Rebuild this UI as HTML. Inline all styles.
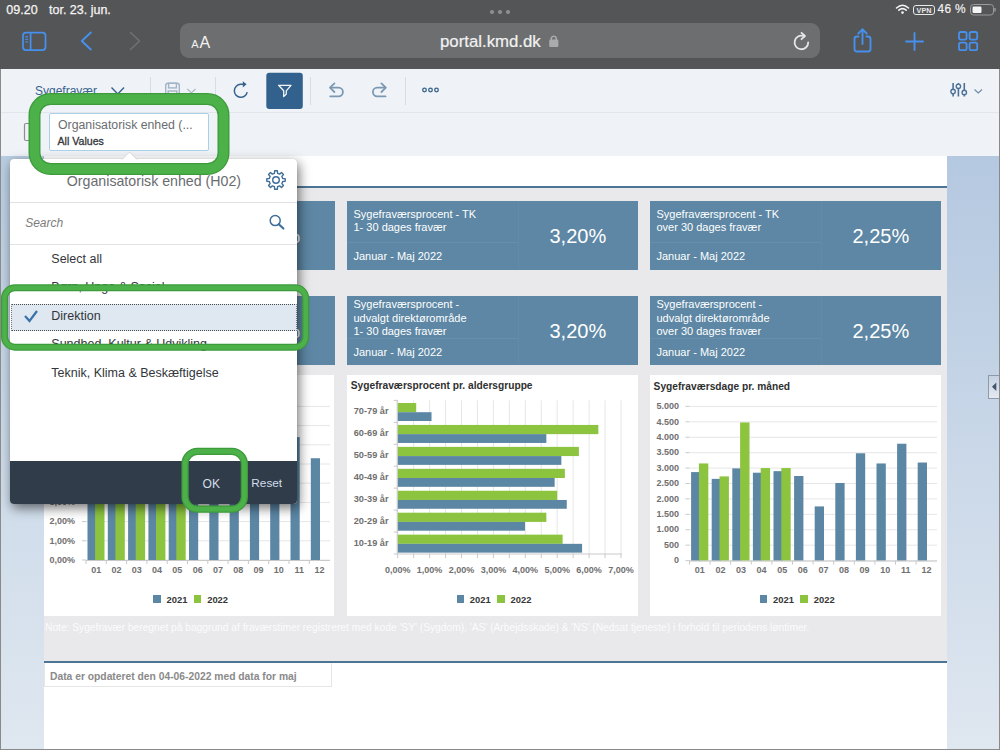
<!DOCTYPE html>
<html><head><meta charset="utf-8">
<style>
*{box-sizing:border-box;margin:0;padding:0}
html,body{width:1000px;height:750px;overflow:hidden;background:#fff;font-family:"Liberation Sans",sans-serif}
.a{position:absolute}
.t{position:absolute;white-space:nowrap;line-height:1}
svg{position:absolute;left:0;top:0;overflow:visible}
</style></head><body>
<div class="a" style="left:0;top:0;width:1000px;height:750px;overflow:hidden">

<div class="a" style="left:0px;top:0px;width:1000px;height:69px;background:#545556;"></div>
<div class="a" style="left:180px;top:23px;width:640px;height:35px;background:#6c6e6f;border-radius:9px"></div>
<div class="a" style="left:0px;top:69px;width:1000px;height:87px;background:#eff3f8;"></div>
<div class="a" style="left:0px;top:112px;width:1000px;height:1px;background:#e0e6ec;"></div>
<div class="t" style="left:6.30px;top:3.62px;font-size:12.5px;color:#f4f4f4;font-weight:normal;font-style:normal;-webkit-text-stroke:0.25px #f4f4f4">09.20</div>
<div class="t" style="left:49.00px;top:3.62px;font-size:12.5px;color:#f4f4f4;font-weight:normal;font-style:normal;-webkit-text-stroke:0.25px #f4f4f4">tor. 23. jun.</div>
<div class="t" style="left:937.50px;top:3.72px;font-size:11.9px;color:#f4f4f4;font-weight:normal;font-style:normal;-webkit-text-stroke:0.15px #f4f4f4;letter-spacing:0.3px">46 %</div>
<svg width="1000" height="750"><g fill="#8e9092"><circle cx="492" cy="12" r="2.1"/><circle cx="500" cy="12" r="2.1"/><circle cx="508" cy="12" r="2.1"/></g><g fill="none" stroke="#f4f4f4" stroke-width="1.6" stroke-linecap="round"><path d="M896.5 8 Q902.5 2.5 908.5 8"/><path d="M898.8 10.2 Q902.5 7 906.2 10.2"/></g><circle cx="902.5" cy="12.6" r="1.3" fill="#f4f4f4"/><rect x="913.5" y="5.5" width="21" height="9" rx="2.5" fill="none" stroke="#e8e8e8" stroke-width="1"/><text x="924" y="13" font-family="Liberation Sans" font-size="7.2" font-weight="bold" fill="#e8e8e8" text-anchor="middle">VPN</text><rect x="970.5" y="4.5" width="23" height="10.5" rx="3" fill="none" stroke="#9a9b9c" stroke-width="1"/><rect x="972.5" y="6.5" width="9" height="6.5" rx="1.2" fill="#f4f4f4"/><path d="M995 8 L995 11.5" stroke="#9a9b9c" stroke-width="1.4"/><g fill="none" stroke="#4690ee" stroke-width="1.75"><rect x="23" y="32.5" width="22.5" height="17.5" rx="3"/><path d="M30.6 32.5 L30.6 50"/></g><g stroke="#4690ee" stroke-width="1.2"><path d="M25.3 36.7 H28"/><path d="M25.3 39.3 H28"/><path d="M25.3 41.9 H28"/></g><path d="M90.8 32.5 L81.8 41 L90.8 49.5" fill="none" stroke="#4690ee" stroke-width="1.9" stroke-linecap="round" stroke-linejoin="round"/><path d="M130.5 32.5 L139.5 41 L130.5 49.5" fill="none" stroke="#707274" stroke-width="1.5" stroke-linecap="round" stroke-linejoin="round"/><text x="191.3" y="47.5" font-family="Liberation Sans" font-size="11" fill="#f2f2f2">A</text><text x="199.5" y="47.5" font-family="Liberation Sans" font-size="16" fill="#f2f2f2">A</text><g><path d="M551.3 40 V37.8 A2.8 2.8 0 0 1 556.3 37.8 V40" fill="none" stroke="#a9abad" stroke-width="1.5"/><rect x="549.2" y="39.6" width="9.2" height="7.4" rx="1.3" fill="#a9abad"/></g><g transform="translate(0,1)"><path d="M808.2 41.5 A6.8 6.8 0 1 1 803.5 35" fill="none" stroke="#e6e6e6" stroke-width="1.8" stroke-linecap="round"/><path d="M801.5 31.8 L805 35 L801.5 38.2" fill="none" stroke="#e6e6e6" stroke-width="1.8" stroke-linecap="round" stroke-linejoin="round"/></g><g fill="none" stroke="#4690ee" stroke-width="1.9" stroke-linecap="round" stroke-linejoin="round"><path d="M858.5 36.5 H857 Q854.5 36.5 854.5 39 V49 Q854.5 51.5 857 51.5 H868 Q870.5 51.5 870.5 49 V39 Q870.5 36.5 868 36.5 H866.5"/><path d="M862.5 44 V29.5"/><path d="M858.3 33.5 L862.5 29.3 L866.7 33.5"/></g><g stroke="#4690ee" stroke-width="1.9" stroke-linecap="round"><path d="M914.5 33 V50"/><path d="M906 41.5 H923"/></g><g fill="none" stroke="#4690ee" stroke-width="1.8"><rect x="959" y="32" width="7.6" height="7.6" rx="1.8"/><rect x="969.6" y="32" width="7.6" height="7.6" rx="1.8"/><rect x="959" y="42.6" width="7.6" height="7.6" rx="1.8"/><rect x="969.6" y="42.6" width="7.6" height="7.6" rx="1.8"/></g></svg>
<div class="t" style="left:440.00px;top:33.65px;font-size:16.8px;color:#f2f2f2;font-weight:normal;font-style:normal;-webkit-text-stroke:0.2px #f2f2f2">portal.kmd.dk</div>
<div class="t" style="left:35.00px;top:85.03px;font-size:12px;color:#37628c;font-weight:normal;font-style:normal;">Sygefravær</div>
<div class="a" style="left:150px;top:77px;width:1px;height:28px;background:#d6dde4;"></div>
<div class="a" style="left:215px;top:77px;width:1px;height:28px;background:#d6dde4;"></div>
<div class="a" style="left:310px;top:77px;width:1px;height:28px;background:#d6dde4;"></div>
<div class="a" style="left:405px;top:77px;width:1px;height:28px;background:#d6dde4;"></div>
<svg width="1000" height="750"><path d="M111.5 87.5 L117.8 94 L124 87.5" fill="none" stroke="#37628c" stroke-width="1.4"/><g fill="none" stroke="#a2b4c5" stroke-width="1.4"><rect x="165.7" y="83.3" width="13.6" height="15" rx="2.2"/><rect x="168.6" y="83.3" width="7.8" height="4.6"/><rect x="168.2" y="91" width="8.6" height="7"/></g><path d="M187.3 89 L191.4 92.8 L195.5 89" fill="none" stroke="#a2b4c5" stroke-width="1.1"/><path d="M247.2 92.2 A6.5 6.5 0 1 1 240.6 84.3 H243.3" fill="none" stroke="#37628c" stroke-width="1.5"/><path d="M242.8 81.2 L246.6 84.3 L242.8 87.4 Z" fill="#37628c"/><rect x="266.3" y="72.7" width="36.5" height="36.2" rx="3" fill="#33618d"/><path d="M278.6 85.3 H291 L286.3 90.8 V94 L283.7 96.6 V90.8 Z" fill="none" stroke="#f2f5f8" stroke-width="1.3" stroke-linejoin="round"/><g fill="none" stroke="#7b98b3" stroke-width="1.8" stroke-linecap="round" stroke-linejoin="round"><path d="M330.2 96.3 H338.6 A4.3 4.3 0 0 0 338.6 87.7 H330.5"/><path d="M334.4 83.4 L330 87.7 L334.4 92"/></g><g fill="none" stroke="#7b98b3" stroke-width="1.8" stroke-linecap="round" stroke-linejoin="round"><path d="M385.6 96.3 H377.2 A4.3 4.3 0 0 1 377.2 87.7 H385.3"/><path d="M381.4 83.4 L385.8 87.7 L381.4 92"/></g><g fill="none" stroke="#37628c" stroke-width="1.3"><circle cx="424.5" cy="90" r="1.8"/><circle cx="430.5" cy="90" r="1.8"/><circle cx="436.5" cy="90" r="1.8"/></g><g fill="none" stroke="#4d7196" stroke-width="1.6"><path d="M953.1 83 V96.5 M958.4 83 V96.5 M964.3 83 V96.5"/></g><g fill="#eff3f8" stroke="#4d7196" stroke-width="1.4"><circle cx="953.1" cy="91.5" r="2.2"/><circle cx="958.4" cy="86.3" r="2.2"/><circle cx="964.3" cy="92.4" r="2.2"/></g><path d="M974.5 89.5 L978.3 93 L982 89.5" fill="none" stroke="#6d8aa6" stroke-width="1.1"/><rect x="24.5" y="123.5" width="10" height="17" rx="1.5" fill="none" stroke="#8d8d8d" stroke-width="1.2"/></svg>
<div class="a" style="left:1px;top:156px;width:43px;height:594px;background:linear-gradient(#b9cde2,#dfe7f0);"></div>
<div class="a" style="left:947px;top:156px;width:53px;height:594px;background:linear-gradient(#b4c8e0,#dfe7f0);"></div>
<div class="a" style="left:44px;top:156px;width:903px;height:30px;background:#fff;"></div>
<div class="a" style="left:44px;top:185.5px;width:903px;height:2.5px;background:#4e7495;"></div>
<div class="a" style="left:44px;top:188px;width:903px;height:473px;background:#e9e9eb;"></div>
<div class="a" style="left:44px;top:661px;width:903px;height:2px;background:#4e7495;"></div>
<div class="a" style="left:44px;top:663px;width:903px;height:87px;background:#fff;"></div>
<div class="a" style="left:44px;top:201px;width:291px;height:69px;background:#5d87a4;"></div>
<div class="a" style="left:44px;top:241.8px;width:171px;height:1px;background:rgba(255,255,255,0.07)"></div>
<div class="a" style="left:215px;top:201px;width:1px;height:69px;background:rgba(255,255,255,0.035)"></div>
<div class="t" style="left:50.50px;top:209.36px;font-size:11px;color:#fff;font-weight:normal;font-style:normal;">Sygefraværsprocent - Direktion</div>
<div class="t" style="left:50.50px;top:222.46px;font-size:11px;color:#fff;font-weight:normal;font-style:normal;">1- 30 dages fravær</div>
<div class="t" style="left:50.50px;top:251.46px;font-size:11px;color:#fff;font-weight:normal;font-style:normal;">Januar - Maj 2022</div>
<div class="t" style="left:243.50px;top:225.59px;font-size:20px;color:#fff;font-weight:normal;font-style:normal;">3,20%</div>
<div class="a" style="left:347px;top:201px;width:291px;height:69px;background:#5d87a4;"></div>
<div class="a" style="left:347px;top:241.8px;width:171px;height:1px;background:rgba(255,255,255,0.07)"></div>
<div class="a" style="left:518px;top:201px;width:1px;height:69px;background:rgba(255,255,255,0.035)"></div>
<div class="t" style="left:353.50px;top:209.36px;font-size:11px;color:#fff;font-weight:normal;font-style:normal;">Sygefraværsprocent - TK</div>
<div class="t" style="left:353.50px;top:222.46px;font-size:11px;color:#fff;font-weight:normal;font-style:normal;">1- 30 dages fravær</div>
<div class="t" style="left:353.50px;top:251.46px;font-size:11px;color:#fff;font-weight:normal;font-style:normal;">Januar - Maj 2022</div>
<div class="t" style="left:549.50px;top:225.59px;font-size:20px;color:#fff;font-weight:normal;font-style:normal;">3,20%</div>
<div class="a" style="left:650px;top:201px;width:291px;height:69px;background:#5d87a4;"></div>
<div class="a" style="left:650px;top:241.8px;width:171px;height:1px;background:rgba(255,255,255,0.07)"></div>
<div class="a" style="left:821px;top:201px;width:1px;height:69px;background:rgba(255,255,255,0.035)"></div>
<div class="t" style="left:656.50px;top:209.36px;font-size:11px;color:#fff;font-weight:normal;font-style:normal;">Sygefraværsprocent - TK</div>
<div class="t" style="left:656.50px;top:222.46px;font-size:11px;color:#fff;font-weight:normal;font-style:normal;">over 30 dages fravær</div>
<div class="t" style="left:656.50px;top:251.46px;font-size:11px;color:#fff;font-weight:normal;font-style:normal;">Januar - Maj 2022</div>
<div class="t" style="left:852.50px;top:225.59px;font-size:20px;color:#fff;font-weight:normal;font-style:normal;">2,25%</div>
<div class="a" style="left:44px;top:296px;width:291px;height:69px;background:#5d87a4;"></div>
<div class="a" style="left:44px;top:338px;width:171px;height:1px;background:rgba(255,255,255,0.07)"></div>
<div class="a" style="left:215px;top:296px;width:1px;height:69px;background:rgba(255,255,255,0.035)"></div>
<div class="t" style="left:50.50px;top:299.26px;font-size:11px;color:#fff;font-weight:normal;font-style:normal;">Sygefraværsprocent -</div>
<div class="t" style="left:50.50px;top:312.86px;font-size:11px;color:#fff;font-weight:normal;font-style:normal;">udvalgt direktørområde</div>
<div class="t" style="left:50.50px;top:326.26px;font-size:11px;color:#fff;font-weight:normal;font-style:normal;">1- 30 dages fravær</div>
<div class="t" style="left:50.50px;top:347.06px;font-size:11px;color:#fff;font-weight:normal;font-style:normal;">Januar - Maj 2022</div>
<div class="t" style="left:243.50px;top:320.99px;font-size:20px;color:#fff;font-weight:normal;font-style:normal;">3,20%</div>
<div class="a" style="left:347px;top:296px;width:291px;height:69px;background:#5d87a4;"></div>
<div class="a" style="left:347px;top:338px;width:171px;height:1px;background:rgba(255,255,255,0.07)"></div>
<div class="a" style="left:518px;top:296px;width:1px;height:69px;background:rgba(255,255,255,0.035)"></div>
<div class="t" style="left:353.50px;top:299.26px;font-size:11px;color:#fff;font-weight:normal;font-style:normal;">Sygefraværsprocent -</div>
<div class="t" style="left:353.50px;top:312.86px;font-size:11px;color:#fff;font-weight:normal;font-style:normal;">udvalgt direktørområde</div>
<div class="t" style="left:353.50px;top:326.26px;font-size:11px;color:#fff;font-weight:normal;font-style:normal;">1- 30 dages fravær</div>
<div class="t" style="left:353.50px;top:347.06px;font-size:11px;color:#fff;font-weight:normal;font-style:normal;">Januar - Maj 2022</div>
<div class="t" style="left:549.50px;top:320.99px;font-size:20px;color:#fff;font-weight:normal;font-style:normal;">3,20%</div>
<div class="a" style="left:650px;top:296px;width:291px;height:69px;background:#5d87a4;"></div>
<div class="a" style="left:650px;top:338px;width:171px;height:1px;background:rgba(255,255,255,0.07)"></div>
<div class="a" style="left:821px;top:296px;width:1px;height:69px;background:rgba(255,255,255,0.035)"></div>
<div class="t" style="left:656.50px;top:299.26px;font-size:11px;color:#fff;font-weight:normal;font-style:normal;">Sygefraværsprocent -</div>
<div class="t" style="left:656.50px;top:312.86px;font-size:11px;color:#fff;font-weight:normal;font-style:normal;">udvalgt direktørområde</div>
<div class="t" style="left:656.50px;top:326.26px;font-size:11px;color:#fff;font-weight:normal;font-style:normal;">over 30 dages fravær</div>
<div class="t" style="left:656.50px;top:347.06px;font-size:11px;color:#fff;font-weight:normal;font-style:normal;">Januar - Maj 2022</div>
<div class="t" style="left:852.50px;top:320.99px;font-size:20px;color:#fff;font-weight:normal;font-style:normal;">2,25%</div>
<div class="a" style="left:44px;top:374.5px;width:290px;height:241.5px;background:#fff;"></div>
<div class="a" style="left:347px;top:374.5px;width:291px;height:241.5px;background:#fff;"></div>
<div class="a" style="left:650px;top:374.5px;width:291px;height:241.5px;background:#fff;"></div>
<svg width="1000" height="750" viewBox="0 0 1000 750"><line x1="86" y1="560.0" x2="330" y2="560.0" stroke="#e6e6e6" stroke-width="1"/><line x1="82" y1="560.0" x2="86" y2="560.0" stroke="#c9c9c9" stroke-width="1"/><line x1="86" y1="540.8" x2="330" y2="540.8" stroke="#e6e6e6" stroke-width="1"/><line x1="82" y1="540.8" x2="86" y2="540.8" stroke="#c9c9c9" stroke-width="1"/><line x1="86" y1="521.6" x2="330" y2="521.6" stroke="#e6e6e6" stroke-width="1"/><line x1="82" y1="521.6" x2="86" y2="521.6" stroke="#c9c9c9" stroke-width="1"/><line x1="86" y1="502.4" x2="330" y2="502.4" stroke="#e6e6e6" stroke-width="1"/><line x1="82" y1="502.4" x2="86" y2="502.4" stroke="#c9c9c9" stroke-width="1"/><line x1="86" y1="483.2" x2="330" y2="483.2" stroke="#e6e6e6" stroke-width="1"/><line x1="82" y1="483.2" x2="86" y2="483.2" stroke="#c9c9c9" stroke-width="1"/><line x1="86" y1="464.0" x2="330" y2="464.0" stroke="#e6e6e6" stroke-width="1"/><line x1="82" y1="464.0" x2="86" y2="464.0" stroke="#c9c9c9" stroke-width="1"/><line x1="86" y1="444.8" x2="330" y2="444.8" stroke="#e6e6e6" stroke-width="1"/><line x1="82" y1="444.8" x2="86" y2="444.8" stroke="#c9c9c9" stroke-width="1"/><line x1="86" y1="425.6" x2="330" y2="425.6" stroke="#e6e6e6" stroke-width="1"/><line x1="82" y1="425.6" x2="86" y2="425.6" stroke="#c9c9c9" stroke-width="1"/><line x1="86" y1="406.4" x2="330" y2="406.4" stroke="#e6e6e6" stroke-width="1"/><line x1="82" y1="406.4" x2="86" y2="406.4" stroke="#c9c9c9" stroke-width="1"/><rect x="87.50" y="429.44" width="9.2" height="130.56" fill="#5b86a4"/><rect x="95.10" y="435.20" width="9.4" height="124.80" fill="#8cc43f"/><line x1="86.00" y1="560" x2="86.00" y2="564" stroke="#c9c9c9"/><rect x="107.80" y="427.52" width="9.2" height="132.48" fill="#5b86a4"/><rect x="115.40" y="429.44" width="9.4" height="130.56" fill="#8cc43f"/><line x1="106.30" y1="560" x2="106.30" y2="564" stroke="#c9c9c9"/><rect x="128.10" y="421.76" width="9.2" height="138.24" fill="#5b86a4"/><rect x="135.70" y="423.68" width="9.4" height="136.32" fill="#8cc43f"/><line x1="126.60" y1="560" x2="126.60" y2="564" stroke="#c9c9c9"/><rect x="148.40" y="431.36" width="9.2" height="128.64" fill="#5b86a4"/><rect x="156.00" y="427.52" width="9.4" height="132.48" fill="#8cc43f"/><line x1="146.90" y1="560" x2="146.90" y2="564" stroke="#c9c9c9"/><rect x="168.70" y="433.28" width="9.2" height="126.72" fill="#5b86a4"/><rect x="176.30" y="435.20" width="9.4" height="124.80" fill="#8cc43f"/><line x1="167.20" y1="560" x2="167.20" y2="564" stroke="#c9c9c9"/><rect x="189.00" y="429.44" width="9.2" height="130.56" fill="#5b86a4"/><line x1="187.50" y1="560" x2="187.50" y2="564" stroke="#c9c9c9"/><rect x="209.30" y="425.60" width="9.2" height="134.40" fill="#5b86a4"/><line x1="207.80" y1="560" x2="207.80" y2="564" stroke="#c9c9c9"/><rect x="229.60" y="427.52" width="9.2" height="132.48" fill="#5b86a4"/><line x1="228.10" y1="560" x2="228.10" y2="564" stroke="#c9c9c9"/><rect x="249.90" y="433.28" width="9.2" height="126.72" fill="#5b86a4"/><line x1="248.40" y1="560" x2="248.40" y2="564" stroke="#c9c9c9"/><rect x="270.20" y="429.44" width="9.2" height="130.56" fill="#5b86a4"/><line x1="268.70" y1="560" x2="268.70" y2="564" stroke="#c9c9c9"/><rect x="290.50" y="437.12" width="9.2" height="122.88" fill="#5b86a4"/><line x1="289.00" y1="560" x2="289.00" y2="564" stroke="#c9c9c9"/><rect x="310.80" y="458.24" width="9.2" height="101.76" fill="#5b86a4"/><line x1="309.30" y1="560" x2="309.30" y2="564" stroke="#c9c9c9"/><line x1="86" y1="560.5" x2="330" y2="560.5" stroke="#c9c9c9"/><line x1="397.70" y1="400.4" x2="397.70" y2="554" stroke="#e6e6e6"/><line x1="397.70" y1="554" x2="397.70" y2="558" stroke="#c9c9c9"/><line x1="413.65" y1="400.4" x2="413.65" y2="554" stroke="#e6e6e6"/><line x1="413.65" y1="554" x2="413.65" y2="558" stroke="#c9c9c9"/><line x1="429.60" y1="400.4" x2="429.60" y2="554" stroke="#e6e6e6"/><line x1="429.60" y1="554" x2="429.60" y2="558" stroke="#c9c9c9"/><line x1="445.55" y1="400.4" x2="445.55" y2="554" stroke="#e6e6e6"/><line x1="445.55" y1="554" x2="445.55" y2="558" stroke="#c9c9c9"/><line x1="461.50" y1="400.4" x2="461.50" y2="554" stroke="#e6e6e6"/><line x1="461.50" y1="554" x2="461.50" y2="558" stroke="#c9c9c9"/><line x1="477.45" y1="400.4" x2="477.45" y2="554" stroke="#e6e6e6"/><line x1="477.45" y1="554" x2="477.45" y2="558" stroke="#c9c9c9"/><line x1="493.40" y1="400.4" x2="493.40" y2="554" stroke="#e6e6e6"/><line x1="493.40" y1="554" x2="493.40" y2="558" stroke="#c9c9c9"/><line x1="509.35" y1="400.4" x2="509.35" y2="554" stroke="#e6e6e6"/><line x1="509.35" y1="554" x2="509.35" y2="558" stroke="#c9c9c9"/><line x1="525.30" y1="400.4" x2="525.30" y2="554" stroke="#e6e6e6"/><line x1="525.30" y1="554" x2="525.30" y2="558" stroke="#c9c9c9"/><line x1="541.25" y1="400.4" x2="541.25" y2="554" stroke="#e6e6e6"/><line x1="541.25" y1="554" x2="541.25" y2="558" stroke="#c9c9c9"/><line x1="557.20" y1="400.4" x2="557.20" y2="554" stroke="#e6e6e6"/><line x1="557.20" y1="554" x2="557.20" y2="558" stroke="#c9c9c9"/><line x1="573.15" y1="400.4" x2="573.15" y2="554" stroke="#e6e6e6"/><line x1="573.15" y1="554" x2="573.15" y2="558" stroke="#c9c9c9"/><line x1="589.10" y1="400.4" x2="589.10" y2="554" stroke="#e6e6e6"/><line x1="589.10" y1="554" x2="589.10" y2="558" stroke="#c9c9c9"/><line x1="605.05" y1="400.4" x2="605.05" y2="554" stroke="#e6e6e6"/><line x1="605.05" y1="554" x2="605.05" y2="558" stroke="#c9c9c9"/><line x1="621.00" y1="400.4" x2="621.00" y2="554" stroke="#e6e6e6"/><line x1="621.00" y1="554" x2="621.00" y2="558" stroke="#c9c9c9"/><rect x="397.7" y="403.00" width="18.50" height="9.2" fill="#8cc43f"/><rect x="397.7" y="412.20" width="33.81" height="8.8" fill="#5b86a4"/><line x1="393.7" y1="400.40" x2="397.7" y2="400.40" stroke="#c9c9c9"/><rect x="397.7" y="424.94" width="200.65" height="9.2" fill="#8cc43f"/><rect x="397.7" y="434.14" width="148.65" height="8.8" fill="#5b86a4"/><line x1="393.7" y1="422.34" x2="397.7" y2="422.34" stroke="#c9c9c9"/><rect x="397.7" y="446.88" width="181.19" height="9.2" fill="#8cc43f"/><rect x="397.7" y="456.08" width="163.65" height="8.8" fill="#5b86a4"/><line x1="393.7" y1="444.28" x2="397.7" y2="444.28" stroke="#c9c9c9"/><rect x="397.7" y="468.82" width="167.16" height="9.2" fill="#8cc43f"/><rect x="397.7" y="478.02" width="156.95" height="8.8" fill="#5b86a4"/><line x1="393.7" y1="466.22" x2="397.7" y2="466.22" stroke="#c9c9c9"/><rect x="397.7" y="490.76" width="159.50" height="9.2" fill="#8cc43f"/><rect x="397.7" y="499.96" width="169.07" height="8.8" fill="#5b86a4"/><line x1="393.7" y1="488.16" x2="397.7" y2="488.16" stroke="#c9c9c9"/><rect x="397.7" y="512.70" width="148.65" height="9.2" fill="#8cc43f"/><rect x="397.7" y="521.90" width="127.28" height="8.8" fill="#5b86a4"/><line x1="393.7" y1="510.10" x2="397.7" y2="510.10" stroke="#c9c9c9"/><rect x="397.7" y="534.64" width="164.92" height="9.2" fill="#8cc43f"/><rect x="397.7" y="543.84" width="184.38" height="8.8" fill="#5b86a4"/><line x1="393.7" y1="532.04" x2="397.7" y2="532.04" stroke="#c9c9c9"/><line x1="393.7" y1="554" x2="397.7" y2="554" stroke="#c9c9c9"/><line x1="397.2" y1="400.4" x2="397.2" y2="554" stroke="#c9c9c9"/><line x1="397.7" y1="554" x2="622" y2="554" stroke="#c9c9c9"/><line x1="689.5" y1="560.60" x2="937" y2="560.60" stroke="#e6e6e6"/><line x1="685.5" y1="560.60" x2="689.5" y2="560.60" stroke="#c9c9c9"/><line x1="689.5" y1="545.18" x2="937" y2="545.18" stroke="#e6e6e6"/><line x1="685.5" y1="545.18" x2="689.5" y2="545.18" stroke="#c9c9c9"/><line x1="689.5" y1="529.76" x2="937" y2="529.76" stroke="#e6e6e6"/><line x1="685.5" y1="529.76" x2="689.5" y2="529.76" stroke="#c9c9c9"/><line x1="689.5" y1="514.34" x2="937" y2="514.34" stroke="#e6e6e6"/><line x1="685.5" y1="514.34" x2="689.5" y2="514.34" stroke="#c9c9c9"/><line x1="689.5" y1="498.92" x2="937" y2="498.92" stroke="#e6e6e6"/><line x1="685.5" y1="498.92" x2="689.5" y2="498.92" stroke="#c9c9c9"/><line x1="689.5" y1="483.50" x2="937" y2="483.50" stroke="#e6e6e6"/><line x1="685.5" y1="483.50" x2="689.5" y2="483.50" stroke="#c9c9c9"/><line x1="689.5" y1="468.08" x2="937" y2="468.08" stroke="#e6e6e6"/><line x1="685.5" y1="468.08" x2="689.5" y2="468.08" stroke="#c9c9c9"/><line x1="689.5" y1="452.66" x2="937" y2="452.66" stroke="#e6e6e6"/><line x1="685.5" y1="452.66" x2="689.5" y2="452.66" stroke="#c9c9c9"/><line x1="689.5" y1="437.24" x2="937" y2="437.24" stroke="#e6e6e6"/><line x1="685.5" y1="437.24" x2="689.5" y2="437.24" stroke="#c9c9c9"/><line x1="689.5" y1="421.82" x2="937" y2="421.82" stroke="#e6e6e6"/><line x1="685.5" y1="421.82" x2="689.5" y2="421.82" stroke="#c9c9c9"/><line x1="689.5" y1="406.40" x2="937" y2="406.40" stroke="#e6e6e6"/><line x1="685.5" y1="406.40" x2="689.5" y2="406.40" stroke="#c9c9c9"/><rect x="691.10" y="472.09" width="9.3" height="88.51" fill="#5b86a4"/><rect x="698.90" y="463.45" width="9.4" height="97.15" fill="#8cc43f"/><line x1="689.50" y1="560.6" x2="689.50" y2="564.6" stroke="#c9c9c9"/><rect x="711.70" y="478.87" width="9.3" height="81.73" fill="#5b86a4"/><rect x="719.50" y="476.41" width="9.4" height="84.19" fill="#8cc43f"/><line x1="710.10" y1="560.6" x2="710.10" y2="564.6" stroke="#c9c9c9"/><rect x="732.30" y="468.39" width="9.3" height="92.21" fill="#5b86a4"/><rect x="740.10" y="422.44" width="9.4" height="138.16" fill="#8cc43f"/><line x1="730.70" y1="560.6" x2="730.70" y2="564.6" stroke="#c9c9c9"/><rect x="752.90" y="472.71" width="9.3" height="87.89" fill="#5b86a4"/><rect x="760.70" y="468.08" width="9.4" height="92.52" fill="#8cc43f"/><line x1="751.30" y1="560.6" x2="751.30" y2="564.6" stroke="#c9c9c9"/><rect x="773.50" y="471.16" width="9.3" height="89.44" fill="#5b86a4"/><rect x="781.30" y="468.08" width="9.4" height="92.52" fill="#8cc43f"/><line x1="771.90" y1="560.6" x2="771.90" y2="564.6" stroke="#c9c9c9"/><rect x="794.10" y="476.01" width="9.3" height="84.59" fill="#5b86a4"/><line x1="792.50" y1="560.6" x2="792.50" y2="564.6" stroke="#c9c9c9"/><rect x="814.70" y="506.41" width="9.3" height="54.19" fill="#5b86a4"/><line x1="813.10" y1="560.6" x2="813.10" y2="564.6" stroke="#c9c9c9"/><rect x="835.30" y="483.01" width="9.3" height="77.59" fill="#5b86a4"/><line x1="833.70" y1="560.6" x2="833.70" y2="564.6" stroke="#c9c9c9"/><rect x="855.90" y="453.28" width="9.3" height="107.32" fill="#5b86a4"/><line x1="854.30" y1="560.6" x2="854.30" y2="564.6" stroke="#c9c9c9"/><rect x="876.50" y="463.45" width="9.3" height="97.15" fill="#5b86a4"/><line x1="874.90" y1="560.6" x2="874.90" y2="564.6" stroke="#c9c9c9"/><rect x="897.10" y="443.72" width="9.3" height="116.88" fill="#5b86a4"/><line x1="895.50" y1="560.6" x2="895.50" y2="564.6" stroke="#c9c9c9"/><rect x="917.70" y="462.53" width="9.3" height="98.07" fill="#5b86a4"/><line x1="916.10" y1="560.6" x2="916.10" y2="564.6" stroke="#c9c9c9"/><line x1="689.5" y1="561.1" x2="937" y2="561.1" stroke="#c9c9c9"/></svg>
<div class="t" style="left:350.80px;top:381.33px;font-size:10.2px;color:#303030;font-weight:bold;font-style:normal;">Sygefraværsprocent pr. aldersgruppe</div>
<div class="t" style="left:653.60px;top:381.73px;font-size:10.2px;color:#303030;font-weight:bold;font-style:normal;">Sygefraværsdage pr. måned</div>
<div class="t" style="left:47.50px;top:380.53px;font-size:10.2px;color:#222;font-weight:bold;font-style:normal;">Sygefraværsprocent pr. måned</div>
<div class="t" style="left:-125px;width:200px;text-align:right;top:555.73px;font-size:9px;color:#707070;font-weight:bold">0,00%</div>
<div class="t" style="left:-125px;width:200px;text-align:right;top:536.53px;font-size:9px;color:#707070;font-weight:bold">1,00%</div>
<div class="t" style="left:-125px;width:200px;text-align:right;top:517.33px;font-size:9px;color:#707070;font-weight:bold">2,00%</div>
<div class="t" style="left:-125px;width:200px;text-align:right;top:498.13px;font-size:9px;color:#707070;font-weight:bold">3,00%</div>
<div class="t" style="left:-125px;width:200px;text-align:right;top:478.93px;font-size:9px;color:#707070;font-weight:bold">4,00%</div>
<div class="t" style="left:-125px;width:200px;text-align:right;top:459.73px;font-size:9px;color:#707070;font-weight:bold">5,00%</div>
<div class="t" style="left:-125px;width:200px;text-align:right;top:440.53px;font-size:9px;color:#707070;font-weight:bold">6,00%</div>
<div class="t" style="left:-125px;width:200px;text-align:right;top:421.33px;font-size:9px;color:#707070;font-weight:bold">7,00%</div>
<div class="t" style="left:-125px;width:200px;text-align:right;top:402.13px;font-size:9px;color:#707070;font-weight:bold">8,00%</div>
<div class="t" style="left:-3.85px;width:200px;text-align:center;top:565.53px;font-size:9px;color:#707070;font-weight:bold">01</div>
<div class="t" style="left:16.45px;width:200px;text-align:center;top:565.53px;font-size:9px;color:#707070;font-weight:bold">02</div>
<div class="t" style="left:36.75px;width:200px;text-align:center;top:565.53px;font-size:9px;color:#707070;font-weight:bold">03</div>
<div class="t" style="left:57.05px;width:200px;text-align:center;top:565.53px;font-size:9px;color:#707070;font-weight:bold">04</div>
<div class="t" style="left:77.35px;width:200px;text-align:center;top:565.53px;font-size:9px;color:#707070;font-weight:bold">05</div>
<div class="t" style="left:97.65px;width:200px;text-align:center;top:565.53px;font-size:9px;color:#707070;font-weight:bold">06</div>
<div class="t" style="left:117.95px;width:200px;text-align:center;top:565.53px;font-size:9px;color:#707070;font-weight:bold">07</div>
<div class="t" style="left:138.25px;width:200px;text-align:center;top:565.53px;font-size:9px;color:#707070;font-weight:bold">08</div>
<div class="t" style="left:158.55px;width:200px;text-align:center;top:565.53px;font-size:9px;color:#707070;font-weight:bold">09</div>
<div class="t" style="left:178.85px;width:200px;text-align:center;top:565.53px;font-size:9px;color:#707070;font-weight:bold">10</div>
<div class="t" style="left:199.15px;width:200px;text-align:center;top:565.53px;font-size:9px;color:#707070;font-weight:bold">11</div>
<div class="t" style="left:219.45px;width:200px;text-align:center;top:565.53px;font-size:9px;color:#707070;font-weight:bold">12</div>
<div class="t" style="left:188.5px;width:200px;text-align:right;top:406.93px;font-size:9.2px;color:#707070;font-weight:bold">70-79 år</div>
<div class="t" style="left:188.5px;width:200px;text-align:right;top:428.87px;font-size:9.2px;color:#707070;font-weight:bold">60-69 år</div>
<div class="t" style="left:188.5px;width:200px;text-align:right;top:450.81px;font-size:9.2px;color:#707070;font-weight:bold">50-59 år</div>
<div class="t" style="left:188.5px;width:200px;text-align:right;top:472.75px;font-size:9.2px;color:#707070;font-weight:bold">40-49 år</div>
<div class="t" style="left:188.5px;width:200px;text-align:right;top:494.69px;font-size:9.2px;color:#707070;font-weight:bold">30-39 år</div>
<div class="t" style="left:188.5px;width:200px;text-align:right;top:516.63px;font-size:9.2px;color:#707070;font-weight:bold">20-29 år</div>
<div class="t" style="left:188.5px;width:200px;text-align:right;top:538.57px;font-size:9.2px;color:#707070;font-weight:bold">10-19 år</div>
<div class="t" style="left:297.70px;width:200px;text-align:center;top:566.03px;font-size:9px;color:#707070;font-weight:bold">0,00%</div>
<div class="t" style="left:329.60px;width:200px;text-align:center;top:566.03px;font-size:9px;color:#707070;font-weight:bold">1,00%</div>
<div class="t" style="left:361.50px;width:200px;text-align:center;top:566.03px;font-size:9px;color:#707070;font-weight:bold">2,00%</div>
<div class="t" style="left:393.40px;width:200px;text-align:center;top:566.03px;font-size:9px;color:#707070;font-weight:bold">3,00%</div>
<div class="t" style="left:425.30px;width:200px;text-align:center;top:566.03px;font-size:9px;color:#707070;font-weight:bold">4,00%</div>
<div class="t" style="left:457.20px;width:200px;text-align:center;top:566.03px;font-size:9px;color:#707070;font-weight:bold">5,00%</div>
<div class="t" style="left:489.10px;width:200px;text-align:center;top:566.03px;font-size:9px;color:#707070;font-weight:bold">6,00%</div>
<div class="t" style="left:521.00px;width:200px;text-align:center;top:566.03px;font-size:9px;color:#707070;font-weight:bold">7,00%</div>
<div class="t" style="left:479px;width:200px;text-align:right;top:556.33px;font-size:9px;color:#707070;font-weight:bold">0</div>
<div class="t" style="left:479px;width:200px;text-align:right;top:540.91px;font-size:9px;color:#707070;font-weight:bold">500</div>
<div class="t" style="left:479px;width:200px;text-align:right;top:525.49px;font-size:9px;color:#707070;font-weight:bold">1.000</div>
<div class="t" style="left:479px;width:200px;text-align:right;top:510.07px;font-size:9px;color:#707070;font-weight:bold">1.500</div>
<div class="t" style="left:479px;width:200px;text-align:right;top:494.65px;font-size:9px;color:#707070;font-weight:bold">2.000</div>
<div class="t" style="left:479px;width:200px;text-align:right;top:479.23px;font-size:9px;color:#707070;font-weight:bold">2.500</div>
<div class="t" style="left:479px;width:200px;text-align:right;top:463.81px;font-size:9px;color:#707070;font-weight:bold">3.000</div>
<div class="t" style="left:479px;width:200px;text-align:right;top:448.39px;font-size:9px;color:#707070;font-weight:bold">3.500</div>
<div class="t" style="left:479px;width:200px;text-align:right;top:432.97px;font-size:9px;color:#707070;font-weight:bold">4.000</div>
<div class="t" style="left:479px;width:200px;text-align:right;top:417.55px;font-size:9px;color:#707070;font-weight:bold">4.500</div>
<div class="t" style="left:479px;width:200px;text-align:right;top:402.13px;font-size:9px;color:#707070;font-weight:bold">5.000</div>
<div class="t" style="left:599.80px;width:200px;text-align:center;top:565.53px;font-size:9px;color:#707070;font-weight:bold">01</div>
<div class="t" style="left:620.40px;width:200px;text-align:center;top:565.53px;font-size:9px;color:#707070;font-weight:bold">02</div>
<div class="t" style="left:641.00px;width:200px;text-align:center;top:565.53px;font-size:9px;color:#707070;font-weight:bold">03</div>
<div class="t" style="left:661.60px;width:200px;text-align:center;top:565.53px;font-size:9px;color:#707070;font-weight:bold">04</div>
<div class="t" style="left:682.20px;width:200px;text-align:center;top:565.53px;font-size:9px;color:#707070;font-weight:bold">05</div>
<div class="t" style="left:702.80px;width:200px;text-align:center;top:565.53px;font-size:9px;color:#707070;font-weight:bold">06</div>
<div class="t" style="left:723.40px;width:200px;text-align:center;top:565.53px;font-size:9px;color:#707070;font-weight:bold">07</div>
<div class="t" style="left:744.00px;width:200px;text-align:center;top:565.53px;font-size:9px;color:#707070;font-weight:bold">08</div>
<div class="t" style="left:764.60px;width:200px;text-align:center;top:565.53px;font-size:9px;color:#707070;font-weight:bold">09</div>
<div class="t" style="left:785.20px;width:200px;text-align:center;top:565.53px;font-size:9px;color:#707070;font-weight:bold">10</div>
<div class="t" style="left:805.80px;width:200px;text-align:center;top:565.53px;font-size:9px;color:#707070;font-weight:bold">11</div>
<div class="t" style="left:826.40px;width:200px;text-align:center;top:565.53px;font-size:9px;color:#707070;font-weight:bold">12</div>
<div class="a" style="left:153.2px;top:595px;width:7.5px;height:7.5px;background:#5b86a4;"></div>
<div class="t" style="left:166.50px;top:595.09px;font-size:9.4px;color:#363636;font-weight:bold;font-style:normal;">2021</div>
<div class="a" style="left:193.7px;top:595px;width:7.5px;height:7.5px;background:#8cc43f;"></div>
<div class="t" style="left:207.20px;top:595.09px;font-size:9.4px;color:#363636;font-weight:bold;font-style:normal;">2022</div>
<div class="a" style="left:456.5px;top:595px;width:7.5px;height:7.5px;background:#5b86a4;"></div>
<div class="t" style="left:469.80px;top:595.09px;font-size:9.4px;color:#363636;font-weight:bold;font-style:normal;">2021</div>
<div class="a" style="left:497.0px;top:595px;width:7.5px;height:7.5px;background:#8cc43f;"></div>
<div class="t" style="left:510.50px;top:595.09px;font-size:9.4px;color:#363636;font-weight:bold;font-style:normal;">2022</div>
<div class="a" style="left:759.8px;top:595px;width:7.5px;height:7.5px;background:#5b86a4;"></div>
<div class="t" style="left:773.10px;top:595.09px;font-size:9.4px;color:#363636;font-weight:bold;font-style:normal;">2021</div>
<div class="a" style="left:800.3px;top:595px;width:7.5px;height:7.5px;background:#8cc43f;"></div>
<div class="t" style="left:813.80px;top:595.09px;font-size:9.4px;color:#363636;font-weight:bold;font-style:normal;">2022</div>
<div class="t" style="left:45.00px;top:622.71px;font-size:10.22px;color:#fbfbfb;font-weight:normal;font-style:normal;">Note: Sygefravær beregnet på baggrund af fraværstimer registreret med kode 'SY' (Sygdom), 'AS' (Arbejdsskade) &amp; 'NS' (Nedsat tjeneste) i forhold til periodens løntimer.</div>
<div class="a" style="left:44px;top:663px;width:288px;height:24px;border:1px solid #e6e6e6;border-top:none"></div>
<div class="t" style="left:50.00px;top:671.65px;font-size:10.3px;color:#8a8a8a;font-weight:bold;font-style:normal;">Data er opdateret den 04-06-2022 med data for maj</div>
<div class="a" style="left:10px;top:159.3px;width:287px;height:344.3px;background:#fff;border-radius:4px;box-shadow:0 0 1px rgba(0,0,0,0.12),2px 4px 12px rgba(0,0,0,0.55)"></div>
<svg width="1000" height="750"><path d="M122 159.5 L129.5 152 L137 159.5" fill="#fff" stroke="#d6d6d6" stroke-width="1"/></svg>
<div class="a" style="left:10px;top:202px;width:287px;height:1px;background:#e2e2e2;"></div>
<div class="a" style="left:10px;top:243.5px;width:287px;height:1px;background:#e2e2e2;"></div>
<div class="t" style="left:66.80px;top:173.81px;font-size:14.2px;color:#6a6d70;font-weight:normal;font-style:normal;">Organisatorisk enhed (H02)</div>
<div class="t" style="left:25.20px;top:216.93px;font-size:12px;color:#7c7c7c;font-weight:normal;font-style:italic;">Search</div>
<svg width="1000" height="750"><g transform="translate(276,180)" fill="none" stroke="#3f6f99" stroke-width="1.4"><path d="M6.72,-1.55 L9.20,-1.37 L9.20,1.37 L6.72,1.55 L5.85,3.66 L7.48,5.53 L5.53,7.48 L3.66,5.85 L1.55,6.72 L1.37,9.20 L-1.37,9.20 L-1.55,6.72 L-3.66,5.85 L-5.53,7.48 L-7.48,5.53 L-5.85,3.66 L-6.72,1.55 L-9.20,1.37 L-9.20,-1.37 L-6.72,-1.55 L-5.85,-3.66 L-7.48,-5.53 L-5.53,-7.48 L-3.66,-5.85 L-1.55,-6.72 L-1.37,-9.20 L1.37,-9.20 L1.55,-6.72 L3.66,-5.85 L5.53,-7.48 L7.48,-5.53 L5.85,-3.66 Z" stroke-linejoin="round"/><circle r="3.3"/></g><g fill="none" stroke="#3f6f99" stroke-width="1.5"><circle cx="275.2" cy="220.6" r="5"/><path d="M278.8 224.2 L283.4 228.6" stroke-width="2.1" stroke-linecap="round"/></g></svg>
<div class="a" style="left:11px;top:304px;width:286px;height:26.5px;background:#dfe8f1;border-top:1px dotted #4a4a4a;border-bottom:1px dotted #4a4a4a;border-left:1px dotted #777;border-right:1px dotted #777"></div>
<div class="t" style="left:51.30px;top:252.62px;font-size:12.5px;color:#32363a;font-weight:normal;font-style:normal;">Select all</div>
<div class="t" style="left:51.30px;top:281.12px;font-size:12.5px;color:#32363a;font-weight:normal;font-style:normal;">Børn, Unge &amp; Social</div>
<div class="t" style="left:51.30px;top:309.62px;font-size:12.5px;color:#32363a;font-weight:normal;font-style:normal;">Direktion</div>
<div class="t" style="left:51.30px;top:338.12px;font-size:12.5px;color:#32363a;font-weight:normal;font-style:normal;">Sundhed, Kultur &amp; Udvikling</div>
<div class="t" style="left:51.30px;top:366.62px;font-size:12.5px;color:#32363a;font-weight:normal;font-style:normal;">Teknik, Klima &amp; Beskæftigelse</div>
<svg width="1000" height="750"><path d="M25 316 L29.5 321 L37 311" fill="none" stroke="#3a72a8" stroke-width="2.2"/></svg>
<div class="a" style="left:10px;top:460.9px;width:287px;height:42.7px;background:#303c4a;border-radius:0 0 4px 4px"></div>
<div class="t" style="left:202.50px;top:477.95px;font-size:12.1px;color:#d3dee9;font-weight:normal;font-style:normal;">OK</div>
<div class="t" style="left:251.30px;top:478.20px;font-size:11.8px;color:#d3dee9;font-weight:normal;font-style:normal;">Reset</div>
<div class="a" style="left:49.4px;top:113.3px;width:160px;height:38px;background:#fff;border:1px solid #a9d0e6;border-radius:2px"></div>
<div class="t" style="left:58.00px;top:118.98px;font-size:12.3px;color:#6a6d70;font-weight:normal;font-style:normal;">Organisatorisk enhed (...</div>
<div class="t" style="left:57.50px;top:135.50px;font-size:10.6px;color:#32363a;font-weight:normal;font-style:normal;-webkit-text-stroke:0.3px #32363a">All Values</div>
<svg width="1000" height="750"><rect x="34.5" y="99.0" width="189.0" height="70" rx="16.0" fill="none" stroke="#3d9b3b" stroke-width="12"/><rect x="34.5" y="99.0" width="189.0" height="70" rx="16.0" fill="none" stroke="#4db14a" stroke-width="9.4"/></svg>
<svg width="1000" height="750"><rect x="4.5" y="287.8" width="301.2" height="59.39999999999998" rx="10.5" fill="none" stroke="#3d9b3b" stroke-width="7"/><rect x="4.5" y="287.8" width="301.2" height="59.39999999999998" rx="10.5" fill="none" stroke="#4db14a" stroke-width="4.4"/></svg>
<svg width="1000" height="750"><rect x="185.05" y="451.45" width="59.3" height="57.699999999999946" rx="12.35" fill="none" stroke="#3d9b3b" stroke-width="7.3"/><rect x="185.05" y="451.45" width="59.3" height="57.699999999999946" rx="12.35" fill="none" stroke="#4db14a" stroke-width="4.699999999999999"/></svg>
<div class="a" style="left:988.2px;top:375.2px;width:11px;height:24px;border:1px solid #8f9aa6;border-right:none;background:linear-gradient(#c5d2e2,#e3e9f0)"></div>
<svg width="1000" height="750"><path d="M992 386.8 L996.3 382.6 L996.3 391 Z" fill="#44546b"/></svg>
<div class="a" style="left:0px;top:69px;width:1px;height:681px;background:#8a8a8a;"></div>
<div class="a" style="left:999px;top:69px;width:1px;height:681px;background:#8a8a8a;"></div>
<div class="a" style="left:0px;top:749px;width:1000px;height:1px;background:#8a8a8a;"></div>
</div></body></html>
